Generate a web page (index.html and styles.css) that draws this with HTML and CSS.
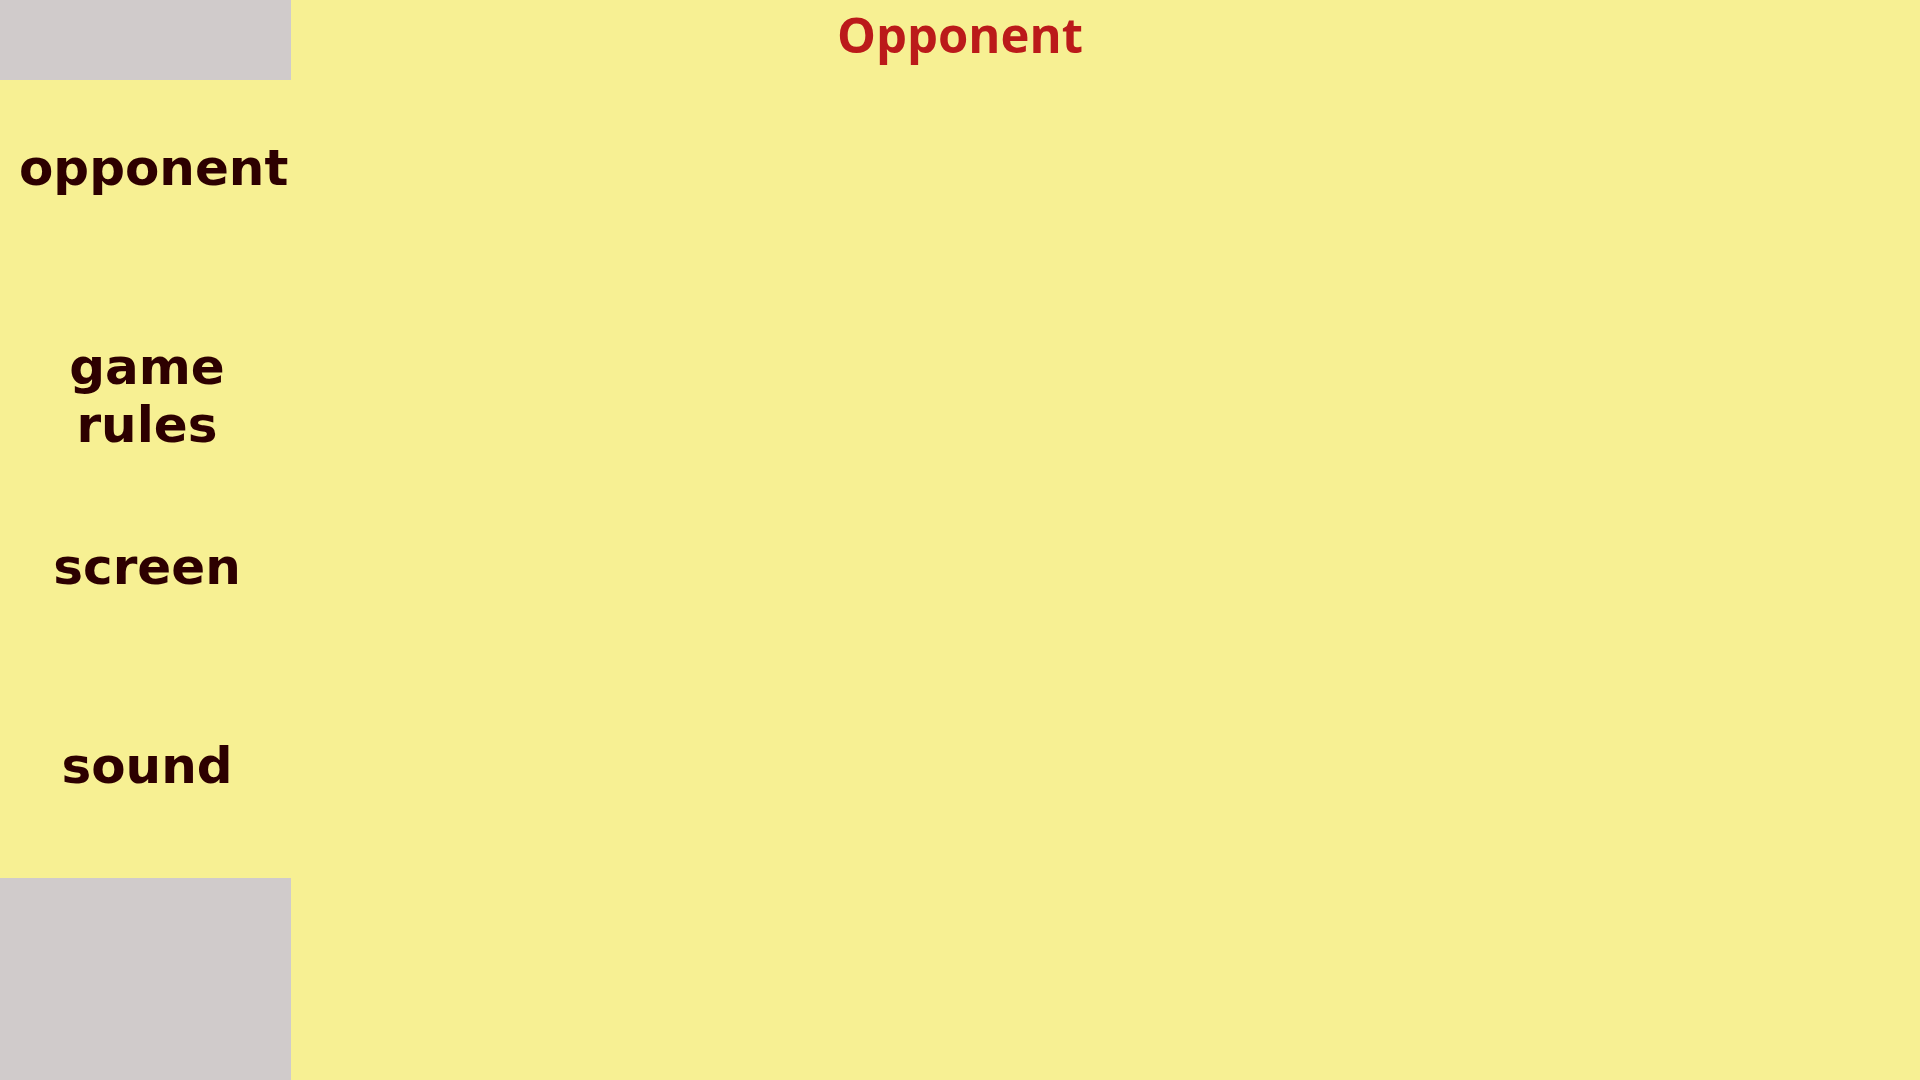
FILE: index.html
```html
<!DOCTYPE html>
<html lang="en">
<head>
<meta charset="utf-8">
<title>Opponent</title>
<link rel="stylesheet" href="styles.css">
</head>
<body>
<div class="app">
  <header class="topbar">
    <div class="corner"></div>
    <h1 class="title">Opponent</h1>
  </header>
  <div class="main">
    <aside class="sidebar">
      <nav class="menu">
        <div class="menu-item">opponent</div>
        <div class="menu-item">game rules</div>
        <div class="menu-item">screen</div>
        <div class="menu-item">sound</div>
      </nav>
      <div class="sidebar-foot"></div>
    </aside>
    <section class="content"></section>
  </div>
</div>
</body>
</html>
```

FILE: styles.css
```css
html, body {
  margin: 0;
  padding: 0;
  height: 100%;
}
body {
  background: #f7f093;
  overflow: hidden;
}
.app {
  display: flex;
  flex-direction: column;
  width: 1920px;
  height: 1080px;
  background: #f7f093;
}
.topbar {
  display: flex;
  height: 80px;
  flex: 0 0 80px;
}
.corner {
  width: 291px;
  flex: 0 0 291px;
  background: #d0cbcb;
}
.title {
  flex: 1;
  margin: 0 291px 0 0;
  text-align: center;
  font-family: "Open Sans", "Noto Sans", sans-serif;
  font-weight: 700;
  font-size: 49px;
  line-height: 68px;
  color: #bb1a1a;
}
.main {
  display: flex;
  flex: 1;
}
.sidebar {
  width: 291px;
  flex: 0 0 291px;
  display: flex;
  flex-direction: column;
}
.menu {
  display: grid;
  grid-template-columns: minmax(0, 1fr);
  grid-template-rows: repeat(4, 199.5px);
}
.menu-item {
  min-width: 0;
  padding: 58.6px 16px 0 19px;
  text-align: center;
  font-family: "DejaVu Sans", sans-serif;
  font-weight: 700;
  font-size: 50px;
  color: #2d0000;
  overflow: visible;
}
.sidebar-foot {
  flex: 1;
  background: #d0cbcb;
}
.content {
  flex: 1;
}
```
